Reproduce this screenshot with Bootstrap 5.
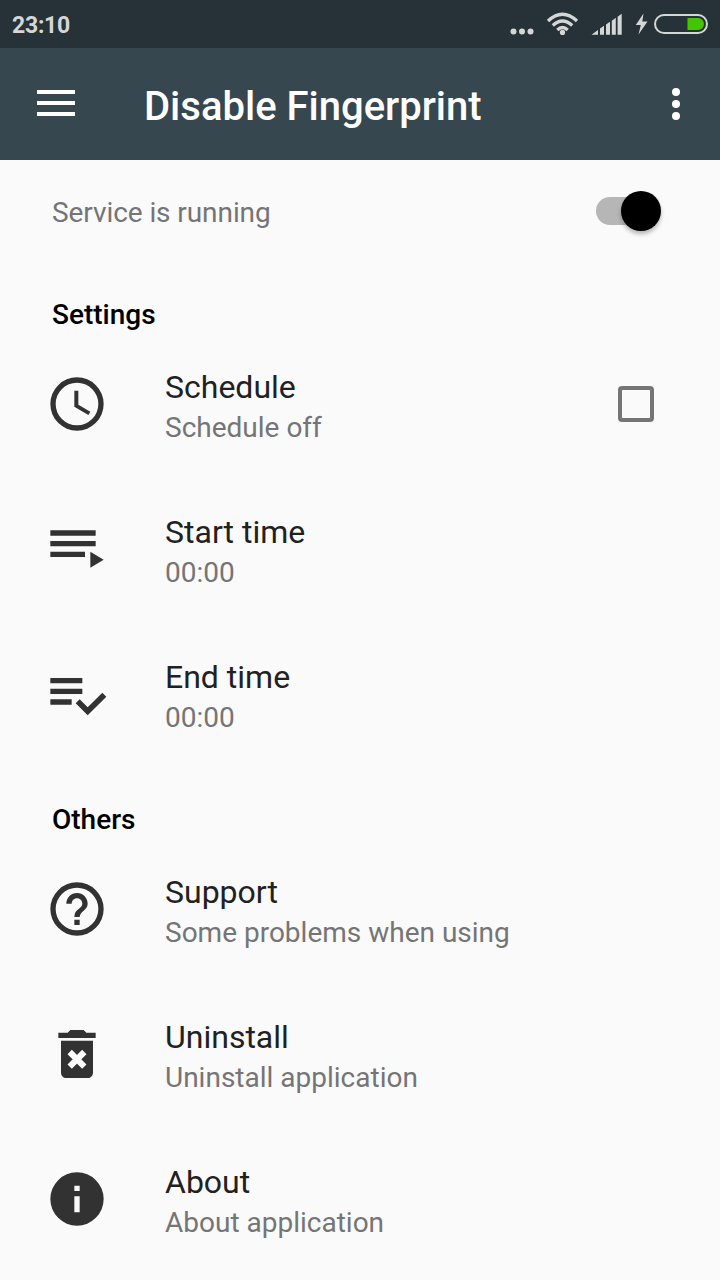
<!DOCTYPE html>
<html lang="en">
<head>
<meta charset="utf-8">
<meta name="viewport" content="width=device-width, initial-scale=1">
<title>Disable Fingerprint</title>
<link href="https://cdn.jsdelivr.net/npm/bootstrap@5.3.0/dist/css/bootstrap.min.css" rel="stylesheet">
<style>
  body { font-family: Roboto, "Noto Sans", sans-serif; background: #fafafa; color: #212121; height: 1280px; overflow: hidden; }
  svg { display: block; flex-shrink: 0; }
  .status-bar { height: 48px; background: #273238; color: #d4d6d7; padding: 2px 12px 0; }
  .clock-text { font-size: 23px; font-weight: 700; line-height: 48px; letter-spacing: -.25px; }
  .app-bar { height: 112px; background: #37474f; color: #fff; padding: 0 35px 0 37px; }
  .app-title { font-size: 40px; font-weight: 500; line-height: 48px; margin: 6px 0 0 69px; }
  .menu-icon { margin-bottom: 1px; }
  .service-row { height: 101px; padding: 0 56px 0 52px; }
  .service-label { padding-top: 5px; letter-spacing: -.08px; }
  .sub-text { font-size: 28px; line-height: 40px; color: #757575; }
  .track { width: 65px; height: 28px; border-radius: 14px; background: linear-gradient(90deg, #b6b6b6 80%, transparent 80%); margin-right: 3px; }
  .thumb { width: 40px; height: 40px; border-radius: 50%; background: #000; box-shadow: 0 3px 4px rgba(0,0,0,.28); margin-top: -6px; }
  .section-title { height: 70px; padding-left: 52px; font-size: 28px; font-weight: 500; line-height: 108px; color: #000; margin: 0; }
  .pref { height: 145px; padding: 0 66px 0 45px; border: 0; background: none; border-radius: 0; color: #212121; }
  .pref-icon { width: 64px; height: 64px; fill: #323232; margin-top: 41px; }
  .pref-text { margin: 36px 0 0 56px; }
  .pref-name { font-size: 32px; line-height: 40px; margin-bottom: 1px; }
  .check-box { width: 36px; height: 36px; border: 4px solid #757575; border-radius: 4px; margin-top: 55px; }
</style>
</head>
<body>
<header>
  <div class="status-bar d-flex justify-content-between align-items-start">
    <span class="clock-text">23:10</span>
    <svg width="200" height="44" viewBox="510 2 200 44" style="margin-right:-2px" fill="#d4d6d7">
      <circle cx="513.5" cy="31.5" r="3"/><circle cx="522" cy="31.5" r="3"/><circle cx="530.5" cy="31.5" r="3"/>
      <g fill="none" stroke="#d4d6d7" stroke-width="3.300">
        <path d="M548 21Q562.500 7.500 577 21M552.800 25.500Q562.500 16.500 572.200 25.500M557.300 30Q562.500 25 567.700 30"/>
      </g>
      <circle cx="562.5" cy="32.4" r="2.600"/>
      <path d="M591.500 34.700 598 30v4.700zM600 28.600l4-2.900v9h-4zM606 24.600l4-2.900v13h-4zM611.800 20.700l4-2.900v16.900h-4zM617.600 16.700l4.100-2.900v20.900h-4.100z"/>
      <path d="M643.500 13.500 635.800 25h5L638.500 34.500l9-12.900h-5.200z"/>
      <rect x="655" y="15" width="52" height="18" rx="9" fill="none" stroke="#d4d6d7" stroke-width="2"/>
      <path d="M687.500 18H698a6 6 0 0 1 0 12h-10.500z" fill="#43c600"/>
    </svg>
  </div>
  <nav class="app-bar d-flex align-items-center">
    <svg class="menu-icon" width="38" height="27" viewBox="0 0 38 27" fill="#fff"><path d="M0 0h38v4H0zM0 11h38v4H0zM0 22h38v4H0z"/></svg>
    <h1 class="app-title">Disable Fingerprint</h1>
    <svg class="ms-auto" style="margin-right:5px" width="8" height="32" viewBox="0 0 8 32" fill="#fff"><circle cx="4" cy="4" r="4"/><circle cx="4" cy="16" r="4"/><circle cx="4" cy="28" r="4"/></svg>
  </nav>
</header>
<main>
  <div class="service-row d-flex align-items-center justify-content-between">
    <span class="sub-text service-label">Service is running</span>
    <div class="track d-flex justify-content-end"><div class="thumb"></div></div>
  </div>
  <h2 class="section-title">Settings</h2>
  <div class="list-group list-group-flush">
    <div class="list-group-item pref d-flex align-items-start">
      <svg class="pref-icon" viewBox="0 0 24 24"><path d="M12 2a10 10 0 1 0 0 20 10 10 0 0 0 0-20zm0 18a8 8 0 1 1 0-16 8 8 0 0 1 0 16z"/><path d="M12.500 7H11v6l5.250 3.150.750-1.230-4.500-2.670z"/></svg>
      <div class="pref-text"><div class="pref-name">Schedule</div><div class="sub-text">Schedule off</div></div>
      <span class="check-box ms-auto"></span>
    </div>
    <div class="list-group-item pref d-flex align-items-start">
      <svg class="pref-icon" viewBox="0 0 24 24"><path d="M19 9H2v2h17V9zm0-4H2v2h17V5zM2 15h13v-2H2v2zm15-2v6l5-3z"/></svg>
      <div class="pref-text"><div class="pref-name">Start time</div><div class="sub-text">00:00</div></div>
    </div>
    <div class="list-group-item pref d-flex align-items-start">
      <svg class="pref-icon" viewBox="0 0 24 24"><path d="M14 10H2v2h12v-2zm0-4H2v2h12V6zM2 16h8v-2H2v2zm19.500-4.500L23 13l-6.990 7-4.510-4.500L13 14l3.010 3 5.490-5.500z"/></svg>
      <div class="pref-text"><div class="pref-name">End time</div><div class="sub-text">00:00</div></div>
    </div>
  </div>
  <h2 class="section-title">Others</h2>
  <div class="list-group list-group-flush">
    <div class="list-group-item pref d-flex align-items-start">
      <svg class="pref-icon" viewBox="0 0 24 24"><path d="M11 18h2v-2h-2v2zm1-16a10 10 0 1 0 0 20 10 10 0 0 0 0-20zm0 18a8 8 0 1 1 0-16 8 8 0 0 1 0 16zm0-14c-2.210 0-4 1.790-4 4h2c0-1.100.900-2 2-2s2 .900 2 2c0 2-3 1.750-3 5h2c0-2.250 3-2.500 3-5 0-2.210-1.790-4-4-4z"/></svg>
      <div class="pref-text"><div class="pref-name">Support</div><div class="sub-text">Some problems when using</div></div>
    </div>
    <div class="list-group-item pref d-flex align-items-start">
      <svg class="pref-icon" viewBox="0 0 24 24"><path d="M6 19c0 1.100.900 2 2 2h8c1.100 0 2-.900 2-2V7H6v12zM15.500 4l-1-1h-5l-1 1H5v2h14V4z"/><path d="M9.250 11.250l5.500 5.500m0-5.500l-5.500 5.500" stroke="#fafafa" stroke-width="2.300"/></svg>
      <div class="pref-text"><div class="pref-name">Uninstall</div><div class="sub-text">Uninstall application</div></div>
    </div>
    <div class="list-group-item pref d-flex align-items-start">
      <svg class="pref-icon" viewBox="0 0 24 24"><path d="M12 2a10 10 0 1 0 0 20 10 10 0 0 0 0-20zm1 15h-2v-6h2v6zm0-8h-2V7h2v2z"/></svg>
      <div class="pref-text"><div class="pref-name">About</div><div class="sub-text">About application</div></div>
    </div>
  </div>
</main>
<script src="https://cdn.jsdelivr.net/npm/bootstrap@5.3.0/dist/js/bootstrap.bundle.min.js"></script>
</body>
</html>
